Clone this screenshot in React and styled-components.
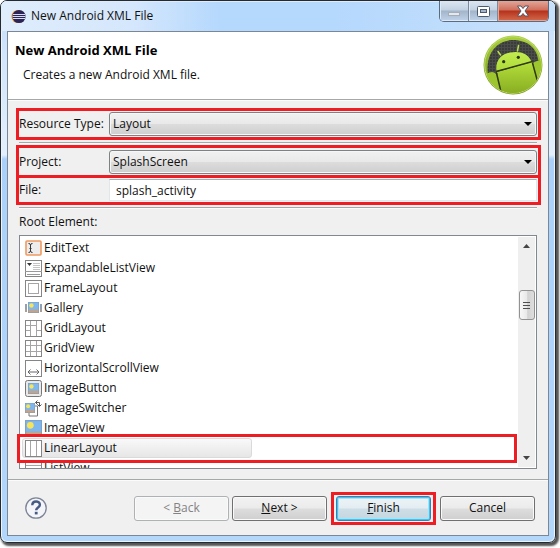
import { useState } from 'react';
import styled, { createGlobalStyle, css } from 'styled-components';

const GlobalStyle = createGlobalStyle`
  * {
    box-sizing: border-box;
  }

  body {
    margin: 0;
    background: white;
    color: #111;
    font-family: "Open Sans", "Noto Sans", sans-serif;
    font-size: 12px;
    line-height: 16px;
  }

  button, input, select {
    font: inherit;
    color: inherit;
    margin: 0;
  }
`;

const Page = styled.div`
  padding: 0 4px 5px 0;
`;

const Window = styled.div`
  display: flex;
  flex-direction: column;
  padding: 0 6px 6px;
  border: 1px solid #26292e;
  border-radius: 7px;
  background: linear-gradient(to bottom, #c3defb 0, #d3e6fb 60px, #e3effc 154px, #abd1fa 158px, #b3d6fb 100%);
  box-shadow: inset 0 0 0 1px #eaf4ff, 2px 2px 2px 1px #555;
`;

const TitleBar = styled.header`
  display: flex;
  justify-content: space-between;
  align-items: flex-start;
  height: 30px;
  margin: 0 -6px;
  padding: 0 6px 0 10px;
  border-radius: 6px 6px 0 0;
  box-shadow: inset 0 1px 0 #dcecfd;
  background: linear-gradient(to right, #dfedfc 0, #d5e7fc 130px, #b5d8fd 220px, #b5d8fd 60%, #c8e1fb 100%);
`;

const WindowTitle = styled.div`
  display: flex;
  align-items: center;
  gap: 5px;
  height: 30px;
`;

const WindowButtons = styled.div`
  display: flex;
  border: 1px solid #5c6c80;
  border-top: 0;
  border-radius: 0 0 5px 5px;
  overflow: hidden;
`;

const WindowButton = styled.button`
  display: flex;
  justify-content: center;
  align-items: center;
  width: 29px;
  height: 20px;
  padding: 0;
  border: 0;
  border-right: 1px solid #7c8a9c;
  background: linear-gradient(to bottom, #dbe6f2 0, #c3d1e1 45%, #a3b5ca 50%, #bfd2e8 100%);
  box-shadow: inset 1px -1px 0 #dce9f7;

  ${({ $close }) => $close && css`
    width: 50px;
    border-right: 0;
    background: linear-gradient(to bottom, #e3a698 0, #cf6f5c 45%, #b5321b 50%, #d46b4d 100%);
    box-shadow: inset 1px -1px 0 #e5a595;
  `}
`;

const Content = styled.main`
  border: 1px solid #7b8794;
  background: #f0f0f0;
`;

const Banner = styled.div`
  display: flex;
  justify-content: space-between;
  align-items: flex-start;
  height: 67px;
  padding: 3px 5px 0 7px;
  background: white;
`;

const BannerText = styled.div`
  padding-top: 6px;
`;

const Heading = styled.h1`
  margin: 0;
  color: black;
  font-size: 13px;
  font-weight: 700;
  line-height: 18px;
`;

const Description = styled.p`
  margin: 8px 0 0 8px;
`;

const Separator = styled.div`
  height: 2px;
  border-top: 1px solid #a5a8a8;
  border-bottom: 1px solid #fbfbfb;
`;

const Form = styled.form`
  display: flex;
  flex-direction: column;
`;

const Fields = styled.div`
  padding: 7px 7px 10px 8px;

  ${Separator} {
    margin: 2px 4px 1px 3px;
  }
`;

const Field = styled.div`
  display: flex;
  align-items: center;
  height: ${({ $height }) => $height}px;
  padding-right: 1px;
  border: 3px solid #ee1c23;

  & + & {
    margin-top: -3px;
  }
`;

const FieldLabel = styled.label`
  flex: none;
  width: 90px;
  white-space: nowrap;
`;

const SelectWrapper = styled.div`
  position: relative;
  flex: 1;

  svg {
    position: absolute;
    top: 10px;
    right: 5px;
    pointer-events: none;
  }
`;

const Select = styled.select`
  display: block;
  appearance: none;
  width: 100%;
  height: 24px;
  padding: 0 20px 0 3px;
  border: 1px solid #7d8285;
  border-radius: 3px;
  background: linear-gradient(to bottom, #f1f1f1 0, #e9e9e9 48%, #dcdcdc 52%, #cecece 100%);
  box-shadow: inset 0 0 0 1px #f6f6f6;
`;

const TextInput = styled.input`
  flex: 1;
  min-width: 0;
  height: 22px;
  padding: 0 6px;
  border: 1px solid #e1e6ec;
  border-top-color: #abadb3;
  background: white;
`;

const ListLabel = styled.div`
  padding: 4px 3px 5px;
`;

const ListBox = styled.div`
  position: relative;
  display: flex;
  height: 234px;
  margin: 0 4px 0 3px;
  border: 1px solid #828790;
  background: white;
`;

const List = styled.ul`
  flex: 1;
  margin: 0;
  padding: 2px;
  overflow: hidden;
  list-style: none;
`;

const Item = styled.li`
  display: flex;
  align-items: center;
  gap: 2px;
  width: 230px;
  height: 20px;
  padding-left: 2px;
  border: 1px solid transparent;
  border-radius: 3px;
  white-space: nowrap;

  svg {
    flex: none;
  }

  ${({ $selected }) => $selected && css`
    border-color: #dadada;
    background: linear-gradient(to bottom, #f9f9f9, #e6e6e6);
  `}
`;

const SelectionFrame = styled.div`
  position: absolute;
  left: -3px;
  right: 19px;
  top: 198px;
  height: 29px;
  border: 3px solid #ee1c23;
  pointer-events: none;
`;

const ScrollBar = styled.div`
  display: flex;
  flex-direction: column;
  align-items: center;
  width: 17px;
  margin: 1px;
  padding: 7px 0;
  background: #efefef;
`;

const Thumb = styled.div`
  display: flex;
  flex-direction: column;
  justify-content: center;
  align-items: center;
  gap: 2px;
  width: 16px;
  height: 30px;
  margin: 42px 0 auto;
  border: 1px solid #929292;
  border-radius: 3px;
  background: linear-gradient(to right, #f7f7f7 0, #e9e9e9 48%, #d2d2d2 55%, #dedede 100%);
`;

const Grip = styled.div`
  width: 7px;
  height: 1px;
  background: #4f4f4f;
`;

const Footer = styled.footer`
  display: flex;
  justify-content: space-between;
  align-items: center;
  height: 54px;
  padding: 0 13px 0 17px;
`;

const Buttons = styled.div`
  display: flex;
  align-items: center;
`;

const Button = styled.button`
  width: 95px;
  height: 25px;
  padding: 0;
  border: 1px solid #707070;
  border-radius: 3px;
  background: linear-gradient(to bottom, #f2f2f2 0, #ebebeb 48%, #dddddd 52%, #cfcfcf 100%);
  box-shadow: inset 0 0 0 1px #fafafa;

  & + & {
    margin-left: 3px;
  }

  &:disabled {
    border-color: #adb2b5;
    background: #f4f4f4;
    color: #838383;
  }

  ${({ $primary }) => $primary && css`
    border-color: #3c7fb1;
    background: linear-gradient(to bottom, #eef4f7 0, #e3edf2 48%, #cfdee6 52%, #c3d6e0 100%);
    box-shadow: inset 0 0 0 1px #3fc4ee, inset 0 0 0 2px #a9e2f5;
  `}
`;

const FinishFrame = styled.div`
  margin: 0 4px;
  padding: 1px 2px;
  border: 3px solid #ee1c23;
`;

const HelpButton = styled.button`
  padding: 0;
  border: 0;
  background: none;

  svg {
    display: block;
  }
`;

const EclipseLogo = () => (
  <svg width="15" height="15" viewBox="0 0 15 15">
    <circle cx="7" cy="7.5" r="6.6" fill="#ee9a38" />
    <circle cx="8" cy="7.5" r="6.6" fill="#2c2456" />
    <path d="M2 5.5h12M1.5 7.5h13M2 9.5h12" stroke="#d6dcf0" strokeWidth="1.1" />
  </svg>
);

const AndroidLogo = () => (
  <svg width="60" height="60" viewBox="0 0 60 60">
    <defs>
      <linearGradient id="ring" x1="0" y1="0" x2="0" y2="1">
        <stop offset="0" stopColor="#a9d03c" />
        <stop offset="1" stopColor="#76961b" />
      </linearGradient>
      <linearGradient id="head" x1="0" y1="0" x2="0" y2="1">
        <stop offset="0" stopColor="#c3ec50" />
        <stop offset="1" stopColor="#aedb38" />
      </linearGradient>
      <linearGradient id="body" x1="0" y1="0" x2="0" y2="1">
        <stop offset="0" stopColor="#b4df3c" />
        <stop offset="1" stopColor="#86ab20" />
      </linearGradient>
      <pattern id="mesh" width="3" height="3" patternUnits="userSpaceOnUse">
        <rect width="3" height="3" fill="#3a3c3a" />
        <path d="M0 .5h3M.5 0v3" stroke="#4a4c4a" strokeWidth="1" />
      </pattern>
      <clipPath id="disc">
        <circle cx="30" cy="30" r="28" />
      </clipPath>
    </defs>
    <circle cx="30" cy="30" r="29.5" fill="url(#ring)" />
    <circle cx="30" cy="30" r="28.3" fill="none" stroke="#c0dc70" strokeWidth="1" />
    <path d="M5 39C2 19 14 5 30 5c15 0 25 9 25.500 23L40 40Z" fill="url(#mesh)" />
    <g clipPath="url(#disc)">
      <path d="M13.500 36C12 26 18 19 27 17.500c10-2 19 1 21.500 9.500Z" fill="url(#head)" />
      <path d="M14 37l35-10 6 23-16 10H19Z" fill="url(#body)" />
      <path d="M3 39q7-4 10 0l6 20Q5 52 3 39ZM50 28q4-3 8-2 3 13-3 23Z" fill="#9dc52d" />
      <path d="M13 36.500L49.500 26.500M13.500 38l5 21M49.500 28l5.500 20" fill="none" stroke="#303a12" strokeWidth="1.500" />
    </g>
    <path d="M17.500 20l-2.500-3.500M34.500 16l1-5.500" stroke="#b9e048" strokeWidth="1.500" strokeLinecap="round" />
    <circle cx="20.700" cy="26.700" r="1.600" fill="#2c3614" />
    <circle cx="35.300" cy="22.300" r="1.600" fill="#2c3614" />
  </svg>
);

const HelpIcon = () => (
  <svg width="22" height="22" viewBox="0 0 22 22">
    <circle cx="11" cy="11" r="10.200" fill="#f4f5f8" stroke="#7c8496" strokeWidth="1.300" />
    <path d="M7.300 8.200c0-5 7.600-4.700 7.600-.5 0 2.800-3.700 2.700-3.700 5.500" fill="none" stroke="#475a86" strokeWidth="2.400" />
    <rect x="9.800" y="14.800" width="2.800" height="2.600" fill="#475a86" />
  </svg>
);

const Arrow = ({ up = false, size = 7, color = '#444' }) => (
  <svg width={size} height="4" viewBox="0 0 8 4" preserveAspectRatio="none">
    <path d={up ? 'M0 4L4 0l4 4Z' : 'M0 0h8L4 4Z'} fill={color} />
  </svg>
);

const Frame = () => <rect x=".5" y=".5" width="16" height="16" fill="white" stroke="#858585" />;

const Photo = ({ x = 0, y = 0, width = 17, height = 17 }) => (
  <svg x={x} y={y} width={width} height={height} viewBox="0 0 16 16" preserveAspectRatio="none">
    <rect width="16" height="16" fill="#7db7ee" />
    <rect y="11" width="16" height="5" fill="#bfa48f" />
    <circle cx="5" cy="5" r="3.200" fill="#f5e45c" />
    <rect x=".5" y=".5" width="15" height="15" fill="none" stroke="#7895b3" strokeOpacity=".6" />
  </svg>
);

const icons = {
  EditText: (
    <>
      <rect x="1" y="1" width="15" height="14" rx="1" fill="#ededed" stroke="#f19a60" strokeWidth="1.600" />
      <path d="M3.500 3.500q2 0 2 1.500v6q0 1.500-2 1.500M7.500 3.500q-2 0-2 1.500v6q0 1.500 2 1.500M4.500 8.500h2" fill="none" stroke="#333" />
    </>
  ),
  ExpandableListView: (
    <>
      <Frame />
      <path d="M2 3h5L4.500 6Z" fill="#333" />
      <path d="M8 3.500h7M8 5.500h7M8 7.500h7M8 9.500h7" stroke="#c4c4c4" />
      <path d="M0 11.500h17M2 14.500h13" stroke="#999" />
    </>
  ),
  FrameLayout: (
    <>
      <Frame />
      <rect x="3.500" y="3.500" width="10" height="10" fill="none" stroke="#a5a5a5" />
    </>
  ),
  Gallery: (
    <>
      <path d="M1 4v8M16 4v8" stroke="#6b8299" strokeWidth="1.500" />
      <path d="M1 9v3M16 9v3" stroke="#b39c8c" strokeWidth="1.500" />
      <Photo x={3} y={2} width={11} height={11} />
    </>
  ),
  GridLayout: (
    <>
      <Frame />
      <path d="M1 5.500h10M5.500 1v5M11.500 1v15M1 10.500h5M5.500 6v10M11 10.500h5" fill="none" stroke="#a5a5a5" />
    </>
  ),
  GridView: (
    <>
      <Frame />
      <path d="M1 5.500h15M1 11.500h15M5.500 1v15M11.500 1v15" stroke="#a5a5a5" />
    </>
  ),
  HorizontalScrollView: (
    <>
      <Frame />
      <path d="M3 12h11M5.500 9.500L3 12l2.500 2.500M11.500 9.500L14 12l-2.500 2.500" fill="none" stroke="#666" />
    </>
  ),
  ImageButton: (
    <>
      <rect x=".5" y=".5" width="16" height="16" rx="2" fill="#e9e9e9" stroke="#777" />
      <Photo x={3} y={3} width={11} height={11} />
    </>
  ),
  ImageSwitcher: (
    <>
      <path d="M4 10v6h8.500V6H10" fill="white" stroke="#777" />
      <Photo x={0} y={3} width={10} height={10} />
      <path d="M10.500 2.500h4V6M12.500.5l-2 2 2 2M12.500 4.500l2 2 2-2" fill="none" stroke="#555" />
    </>
  ),
  ImageView: <Photo />,
  LinearLayout: (
    <>
      <Frame />
      <path d="M5.500 1v15M11.500 1v15" stroke="#a5a5a5" />
    </>
  ),
  ListView: (
    <>
      <Frame />
      <path d="M1 5.500h15M1 11.500h15" stroke="#a5a5a5" />
    </>
  ),
};

const App = () => {
  const [selected, setSelected] = useState('LinearLayout');
  const [file, setFile] = useState('splash_activity');

  return (
    <Page>
      <GlobalStyle />
      <Window>
        <TitleBar>
          <WindowTitle>
            <EclipseLogo />
            <span>New Android XML File</span>
          </WindowTitle>
          <WindowButtons>
            <WindowButton aria-label="Minimize">
              <svg width="13" height="16" viewBox="0 0 13 16">
                <rect x=".5" y="9.500" width="11" height="3" fill="#e3e9ef" stroke="#a4adb8" />
              </svg>
            </WindowButton>
            <WindowButton aria-label="Maximize">
              <svg width="13" height="12" viewBox="0 0 13 12">
                <rect x=".5" y="1.500" width="12" height="10" rx="1" fill="white" stroke="#4e5a70" />
                <rect x="3.500" y="4.500" width="6" height="3" fill="#a4b6cb" stroke="#4e5a70" />
              </svg>
            </WindowButton>
            <WindowButton $close aria-label="Close">
              <svg width="14" height="12" viewBox="0 0 14 12">
                <path d="M1.500 1h3.500L7 3.500 9 1h3.500L9 6l3.500 5H9L7 8.500 5 11H1.500L5 6Z" fill="white" stroke="#535666" />
              </svg>
            </WindowButton>
          </WindowButtons>
        </TitleBar>
        <Content>
          <Banner>
            <BannerText>
              <Heading>New Android XML File</Heading>
              <Description>Creates a new Android XML file.</Description>
            </BannerText>
            <AndroidLogo />
          </Banner>
          <Separator />
          <Form onSubmit={event => event.preventDefault()}>
            <Fields>
              <Field $height={32}>
                <FieldLabel htmlFor="resource-type">Resource Type:</FieldLabel>
                <SelectWrapper>
                  <Select id="resource-type">
                    <option>Layout</option>
                  </Select>
                  <Arrow size={8} color="black" />
                </SelectWrapper>
              </Field>
              <Separator />
              <Field $height={33}>
                <FieldLabel htmlFor="project">Project:</FieldLabel>
                <SelectWrapper>
                  <Select id="project">
                    <option>SplashScreen</option>
                  </Select>
                  <Arrow size={8} color="black" />
                </SelectWrapper>
              </Field>
              <Field $height={30}>
                <FieldLabel htmlFor="file">File:</FieldLabel>
                <TextInput id="file" value={file} onChange={event => setFile(event.target.value)} />
              </Field>
              <Separator />
              <ListLabel id="root-element">Root Element:</ListLabel>
              <ListBox>
                <List role="listbox" aria-labelledby="root-element">
                  {Object.keys(icons).map(name => (
                    <Item
                      key={name}
                      role="option"
                      aria-selected={selected === name}
                      $selected={selected === name}
                      onClick={() => setSelected(name)}
                    >
                      <svg width="17" height="17" viewBox="0 0 17 17">{icons[name]}</svg>
                      {name}
                    </Item>
                  ))}
                </List>
                <ScrollBar>
                  <Arrow up />
                  <Thumb>
                    <Grip />
                    <Grip />
                    <Grip />
                  </Thumb>
                  <Arrow />
                </ScrollBar>
                <SelectionFrame />
              </ListBox>
            </Fields>
            <Separator />
            <Footer>
              <HelpButton type="button" aria-label="Help">
                <HelpIcon />
              </HelpButton>
              <Buttons>
                <Button type="button" disabled>&lt; <u>B</u>ack</Button>
                <Button type="button"><u>N</u>ext &gt;</Button>
                <FinishFrame>
                  <Button type="submit" $primary><u>F</u>inish</Button>
                </FinishFrame>
                <Button type="button">Cancel</Button>
              </Buttons>
            </Footer>
          </Form>
        </Content>
      </Window>
    </Page>
  );
};

export default App;
